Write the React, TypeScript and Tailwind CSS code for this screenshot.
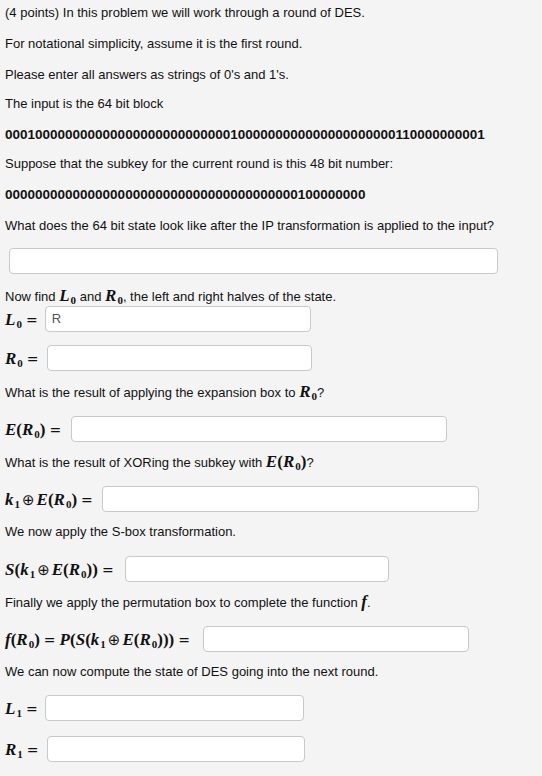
import React from "react";

const V = ({ c }: { c: string }) => <i className="font-bold italic">{c}</i>;
const Sub = ({ c }: { c: string }) => (
  <span className="relative top-[3px] ml-[1px] text-[11px] font-bold not-italic">{c}</span>
);
const P = ({ c }: { c: string }) => <span className="font-bold not-italic">{c}</span>;
const Eq = () => (
  <span className="mx-[4px] font-['DejaVu_Serif',serif] text-[14px] font-normal not-italic">=</span>
);
const Xor = () => (
  <span className="mx-[2px] font-['DejaVu_Sans',sans-serif] text-[15px] font-normal not-italic">⊕</span>
);

const Math = ({ children }: { children: React.ReactNode }) => (
  <span className="font-['Liberation_Serif',serif] text-[17px] leading-none text-[#111]">{children}</span>
);

const R0 = () => (
  <>
    <V c="R" />
    <Sub c="0" />
  </>
);
const ER0 = () => (
  <>
    <V c="E" />
    <P c="(" />
    <R0 />
    <P c=")" />
  </>
);

const Field = ({ w, ml, value }: { w: string; ml: string; value?: string }) => (
  <div
    className={`${w} ${ml} flex h-[26px] items-center rounded-[4px] border border-[#c9c9c9] bg-white px-[6px] text-[13px] text-[#555]`}
  >
    {value}
  </div>
);

const Row = ({ children, className }: { children: React.ReactNode; className: string }) => (
  <div className={`flex h-[26px] items-center pl-[5px] ${className}`}>{children}</div>
);

const Line = ({ children, className }: { children: React.ReactNode; className: string }) => (
  <p className={`h-[18px] whitespace-nowrap pl-[5px] ${className}`}>{children}</p>
);

const BLOCK = "0001" + "0".repeat(26) + "1" + "0".repeat(21) + "11" + "0".repeat(9) + "1";
const KEY = "0".repeat(39) + "1" + "0".repeat(8);

export default function App() {
  return (
    <div className="min-h-[776px] w-[542px] bg-[#f4f4f4] pt-[4px] font-['Liberation_Sans',Arial,sans-serif] text-[13px] leading-[18px] text-[#111]">
      <Line className="">(4 points) In this problem we will work through a round of DES.</Line>
      <Line className="mt-[13px]">For notational simplicity, assume it is the first round.</Line>
      <Line className="mt-[13px]">Please enter all answers as strings of 0's and 1's.</Line>
      <Line className="mt-[11px]">The input is the 64 bit block</Line>
      <Line className="mt-[13px] text-[13.5px] font-bold">{BLOCK}</Line>
      <Line className="mt-[11px]">Suppose that the subkey for the current round is this 48 bit number:</Line>
      <Line className="mt-[13px] text-[13.5px] font-bold">{KEY}</Line>
      <Line className="mt-[13px]">
        What does the 64 bit state look like after the IP transformation is applied to the input?
      </Line>
      <div className="mt-[13px] pl-[9px]">
        <Field w="w-[489px]" ml="ml-0" />
      </div>
      <Line className="mt-[13px]">
        Now find{" "}
        <Math>
          <V c="L" />
          <Sub c="0" />
        </Math>{" "}
        and{" "}
        <Math>
          <R0 />
        </Math>
        , the left and right halves of the state.
      </Line>
      <Row className="mt-[1px]">
        <Math>
          <V c="L" />
          <Sub c="0" />
          <Eq />
        </Math>
        <Field w="w-[266px]" ml="ml-[3px]" value="R" />
      </Row>
      <Row className="mt-[13px]">
        <Math>
          <R0 />
          <Eq />
        </Math>
        <Field w="w-[265px]" ml="ml-[4px]" />
      </Row>
      <Line className="mt-[12px]">
        What is the result of applying the expansion box to{" "}
        <Math>
          <R0 />
        </Math>
        ?
      </Line>
      <Row className="mt-[15px]">
        <Math>
          <ER0 />
          <Eq />
        </Math>
        <Field w="w-[376px]" ml="ml-[6px]" />
      </Row>
      <Line className="mt-[11px]">
        What is the result of XORing the subkey with{" "}
        <Math>
          <ER0 />
        </Math>
        ?
      </Line>
      <Row className="mt-[15px]">
        <Math>
          <V c="k" />
          <Sub c="1" />
          <Xor />
          <ER0 />
          <Eq />
        </Math>
        <Field w="w-[377px]" ml="ml-[5px]" />
      </Row>
      <Line className="mt-[11px]">We now apply the S-box transformation.</Line>
      <Row className="mt-[15px]">
        <Math>
          <V c="S" />
          <P c="(" />
          <V c="k" />
          <Sub c="1" />
          <Xor />
          <ER0 />
          <P c=")" />
          <Eq />
        </Math>
        <Field w="w-[264px]" ml="ml-[7px]" />
      </Row>
      <Line className="mt-[11px]">
        Finally we apply the permutation box to complete the function{" "}
        <Math>
          <V c="f" />
        </Math>
        .
      </Line>
      <Row className="mt-[15px]">
        <Math>
          <V c="f" />
          <P c="(" />
          <R0 />
          <P c=")" />
          <Eq />
          <V c="P" />
          <P c="(" />
          <V c="S" />
          <P c="(" />
          <V c="k" />
          <Sub c="1" />
          <Xor />
          <ER0 />
          <P c=")" />
          <P c=")" />
          <Eq />
        </Math>
        <Field w="w-[266px]" ml="ml-[9px]" />
      </Row>
      <Line className="mt-[11px]">We can now compute the state of DES going into the next round.</Line>
      <Row className="mt-[14px]">
        <Math>
          <V c="L" />
          <Sub c="1" />
          <Eq />
        </Math>
        <Field w="w-[259px]" ml="ml-[3px]" />
      </Row>
      <Row className="mt-[15px]">
        <Math>
          <V c="R" />
          <Sub c="1" />
          <Eq />
        </Math>
        <Field w="w-[258px]" ml="ml-[4px]" />
      </Row>
    </div>
  );
}
